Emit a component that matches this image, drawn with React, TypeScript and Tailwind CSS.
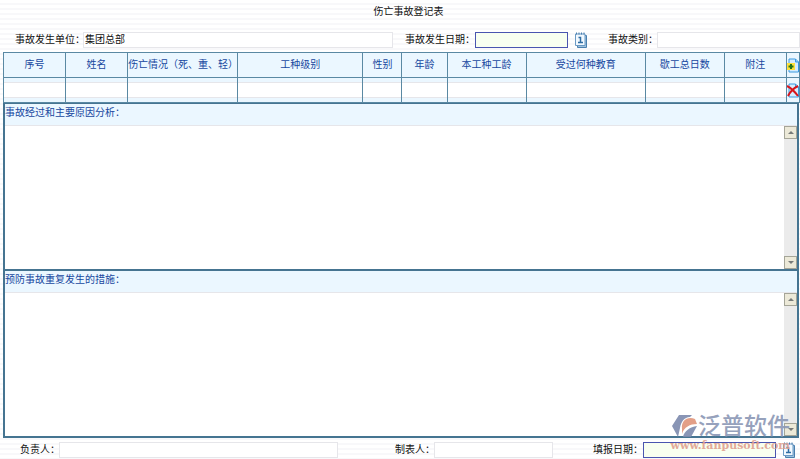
import React, { useState } from 'react';

const columns = [
  { label: '序号', width: 'w-[62px]' },
  { label: '姓名', width: 'w-[62px]' },
  { label: '伤亡情况（死、重、轻）', width: 'w-[110px]' },
  { label: '工种级别', width: 'w-[125px]' },
  { label: '性别', width: 'w-[39px]' },
  { label: '年龄', width: 'w-[45px]' },
  { label: '本工种工龄', width: 'w-[79px]' },
  { label: '受过何种教育', width: 'w-[119px]' },
  { label: '歇工总日数', width: 'w-[79px]' },
  { label: '附注', width: 'w-[62px]' },
];

const plainInput = 'h-4 min-w-0 border border-[#e6e6ea] bg-white px-px outline-none';
const dateInput = 'h-4 min-w-0 border border-[#4a55b0] bg-[#f8fff0] px-px outline-none';

function CalendarIcon() {
  return (
    <svg className="h-4 w-[14px]" viewBox="0 0 14 16" fill="none">
      <path d="M4 3.5h8.500v12H3.500z" fill="#9fc3df" stroke="#4a7fae" />
      <path d="M1.500 2h9.500v11.500H1.500z" fill="#f2f9ff" stroke="#6a9ac4" />
      <path d="M2.500 .5v2M5 .5v2M7.500 .5v2M10 .5v2" stroke="#4a7fae" />
      <path d="M4.500 5.500H6.500V10.500M4 10.500H9" stroke="#2f6da3" strokeWidth="1.500" />
    </svg>
  );
}

function PageIcon({ children }: { children: React.ReactNode }) {
  return (
    <svg className="h-[15px] w-3 shrink-0" viewBox="0 0 12 15" fill="none">
      <path d="M2 1h6.500L11.500 4v10H2z" fill="#d6edff" stroke="#3b9ae0" />
      <path d="M8.500 1v3h3" fill="#8cc8f5" stroke="#3b9ae0" />
      {children}
    </svg>
  );
}

function ScrollButton({ direction, onClick }: { direction: 'up' | 'down'; onClick: () => void }) {
  return (
    <button
      type="button"
      aria-label={direction === 'up' ? '向上滚动' : '向下滚动'}
      onClick={onClick}
      className="flex h-[13px] w-[13px] items-center justify-center border border-[#a5a598] bg-[#ece9d8]"
    >
      <svg className="h-[3px] w-[6px]" viewBox="0 0 6 3">
        <path d={direction === 'up' ? 'M0 3L3 0L6 3z' : 'M0 0L3 3L6 0z'} fill="#777a78" />
      </svg>
    </button>
  );
}

function TextSection({ id, label }: { id: string; label: string }) {
  const ref = React.useRef<HTMLTextAreaElement>(null);
  const scroll = (top: number) => ref.current?.scrollBy({ top });

  return (
    <section className="border-2 border-t-0 border-[#457491]">
      <label htmlFor={id} className="block h-[21px] bg-[#ebf7ff] leading-[18px] text-[#1747a0]">
        {label}
      </label>
      <div className="flex border-t border-[#e6e6ea] bg-white">
        <textarea id={id} ref={ref} className="h-[143px] min-w-0 flex-1 resize-none overflow-hidden px-px outline-none" />
        <div className="flex w-[13px] flex-col justify-between bg-[#ebebeb]">
          <ScrollButton direction="up" onClick={() => scroll(-20)} />
          <ScrollButton direction="down" onClick={() => scroll(20)} />
        </div>
      </div>
    </section>
  );
}

function Watermark() {
  return (
    <div className="pointer-events-none absolute right-[10px] bottom-2 text-[#8b97b5] opacity-90">
      <div className="mb-0.5 flex items-center justify-end">
        <svg className="h-[23px] w-[26px]" viewBox="0 0 26 23">
          <path d="M7 0H20L18 2C12 2 9 7 8 13L6 22L0 11z" fill="#7d8aad" />
          <path d="M10 14C9 6 15 1 23 4L25 9C18 9 12 12 10 19z" fill="#e0957b" />
          <path d="M11 22C12 16 18 12 25 11L19 22z" fill="#7d8aad" />
        </svg>
        <span className="text-[23px] leading-6 font-medium">泛普软件</span>
      </div>
      <div className="text-right font-['DejaVu_Serif',serif] text-[11px] leading-3 font-bold text-[#e0a08f]">
        www.fanpusoft.com
      </div>
    </div>
  );
}

export default function App() {
  const [unit, setUnit] = useState('集团总部');
  const [rows, setRows] = useState([0]);

  return (
    <form className="relative bg-[repeating-linear-gradient(#fff_0px,#fff_3px,#f8f8fa_3px,#f8f8fa_5px)] pb-0.5 font-['Liberation_Sans','Noto_Sans_CJK_SC',sans-serif] text-[10px] leading-4 text-[#111]">
      <h1 className="pt-1 pl-[17px] text-center">伤亡事故登记表</h1>

      <div className="mt-3 flex h-4 items-center pl-[15px]">
        <label htmlFor="unit" className="w-[68px] shrink-0 whitespace-nowrap">事故发生单位：</label>
        <input id="unit" value={unit} onChange={(e) => setUnit(e.target.value)} className={`${plainInput} flex-[306]`} />
        <label htmlFor="date" className="ml-3 w-[70px] shrink-0 whitespace-nowrap">事故发生日期：</label>
        <input id="date" className={`${dateInput} flex-[89]`} />
        <button type="button" aria-label="选择日期" className="mx-1.5"><CalendarIcon /></button>
        <label htmlFor="type" className="ml-3.5 w-[49px] shrink-0 whitespace-nowrap">事故类别：</label>
        <input id="type" className={`${plainInput} flex-[139]`} />
      </div>

      <div className="mt-1 pl-[3px]">
        <table className="w-full table-fixed border-collapse bg-[#ebf7ff]">
          <colgroup>
            {columns.map((c) => (
              <col key={c.label} className={c.width} />
            ))}
            <col className="w-[13px]" />
          </colgroup>
          <thead>
            <tr className="h-[25px]">
              {columns.map((c) => (
                <th key={c.label} className="border border-[#5a89a3] p-0 font-normal whitespace-nowrap text-[#1747a0]">
                  {c.label}
                </th>
              ))}
              <th className="border border-[#5a89a3] p-0">
                <button type="button" aria-label="添加行" className="block" onClick={() => setRows([...rows, rows.length])}>
                  <PageIcon>
                    <path d="M0 5h8v7H0z" fill="#ffe13a" />
                    <path d="M4 6v5M1.500 8.500h5" stroke="#27751b" strokeWidth="2" />
                  </PageIcon>
                </button>
              </th>
            </tr>
          </thead>
          <tbody>
            {rows.map((row) => (
              <tr key={row} className="h-[25px]">
                {columns.map((c) => (
                  <td key={c.label} className="border border-[#5a89a3] p-0">
                    <input aria-label={c.label} className="block h-4 w-full border-y border-[#e6e6ea] bg-white px-px outline-none" />
                  </td>
                ))}
                <td className="border border-[#5a89a3] p-0">
                  <button type="button" aria-label="删除行" className="block" onClick={() => setRows(rows.filter((r) => r !== row))}>
                    <PageIcon>
                      <path d="M0 3C4 5 8 9 11 13M11 3C7 5 3 9 1 13" stroke="#d9151b" strokeWidth="2" />
                    </PageIcon>
                  </button>
                </td>
              </tr>
            ))}
          </tbody>
        </table>
        <div className="mr-px border-t border-[#457491]">
          <TextSection id="cause" label="事故经过和主要原因分析：" />
          <TextSection id="measures" label="预防事故重复发生的措施：" />
        </div>
      </div>

      <div className="mt-1 flex h-4 items-center pl-5">
        <label htmlFor="leader" className="w-[39px] shrink-0 whitespace-nowrap">负责人：</label>
        <input id="leader" className={`${plainInput} flex-[275]`} />
        <label htmlFor="maker" className="ml-[57px] w-[39px] shrink-0 whitespace-nowrap">制表人：</label>
        <input id="maker" className={`${plainInput} flex-[115]`} />
        <label htmlFor="filled" className="ml-10 w-[50px] shrink-0 whitespace-nowrap">填报日期：</label>
        <input id="filled" className={`${dateInput} flex-[129]`} />
        <button type="button" aria-label="选择填报日期" className="mr-1 ml-1.5"><CalendarIcon /></button>
      </div>

      <Watermark />
    </form>
  );
}
